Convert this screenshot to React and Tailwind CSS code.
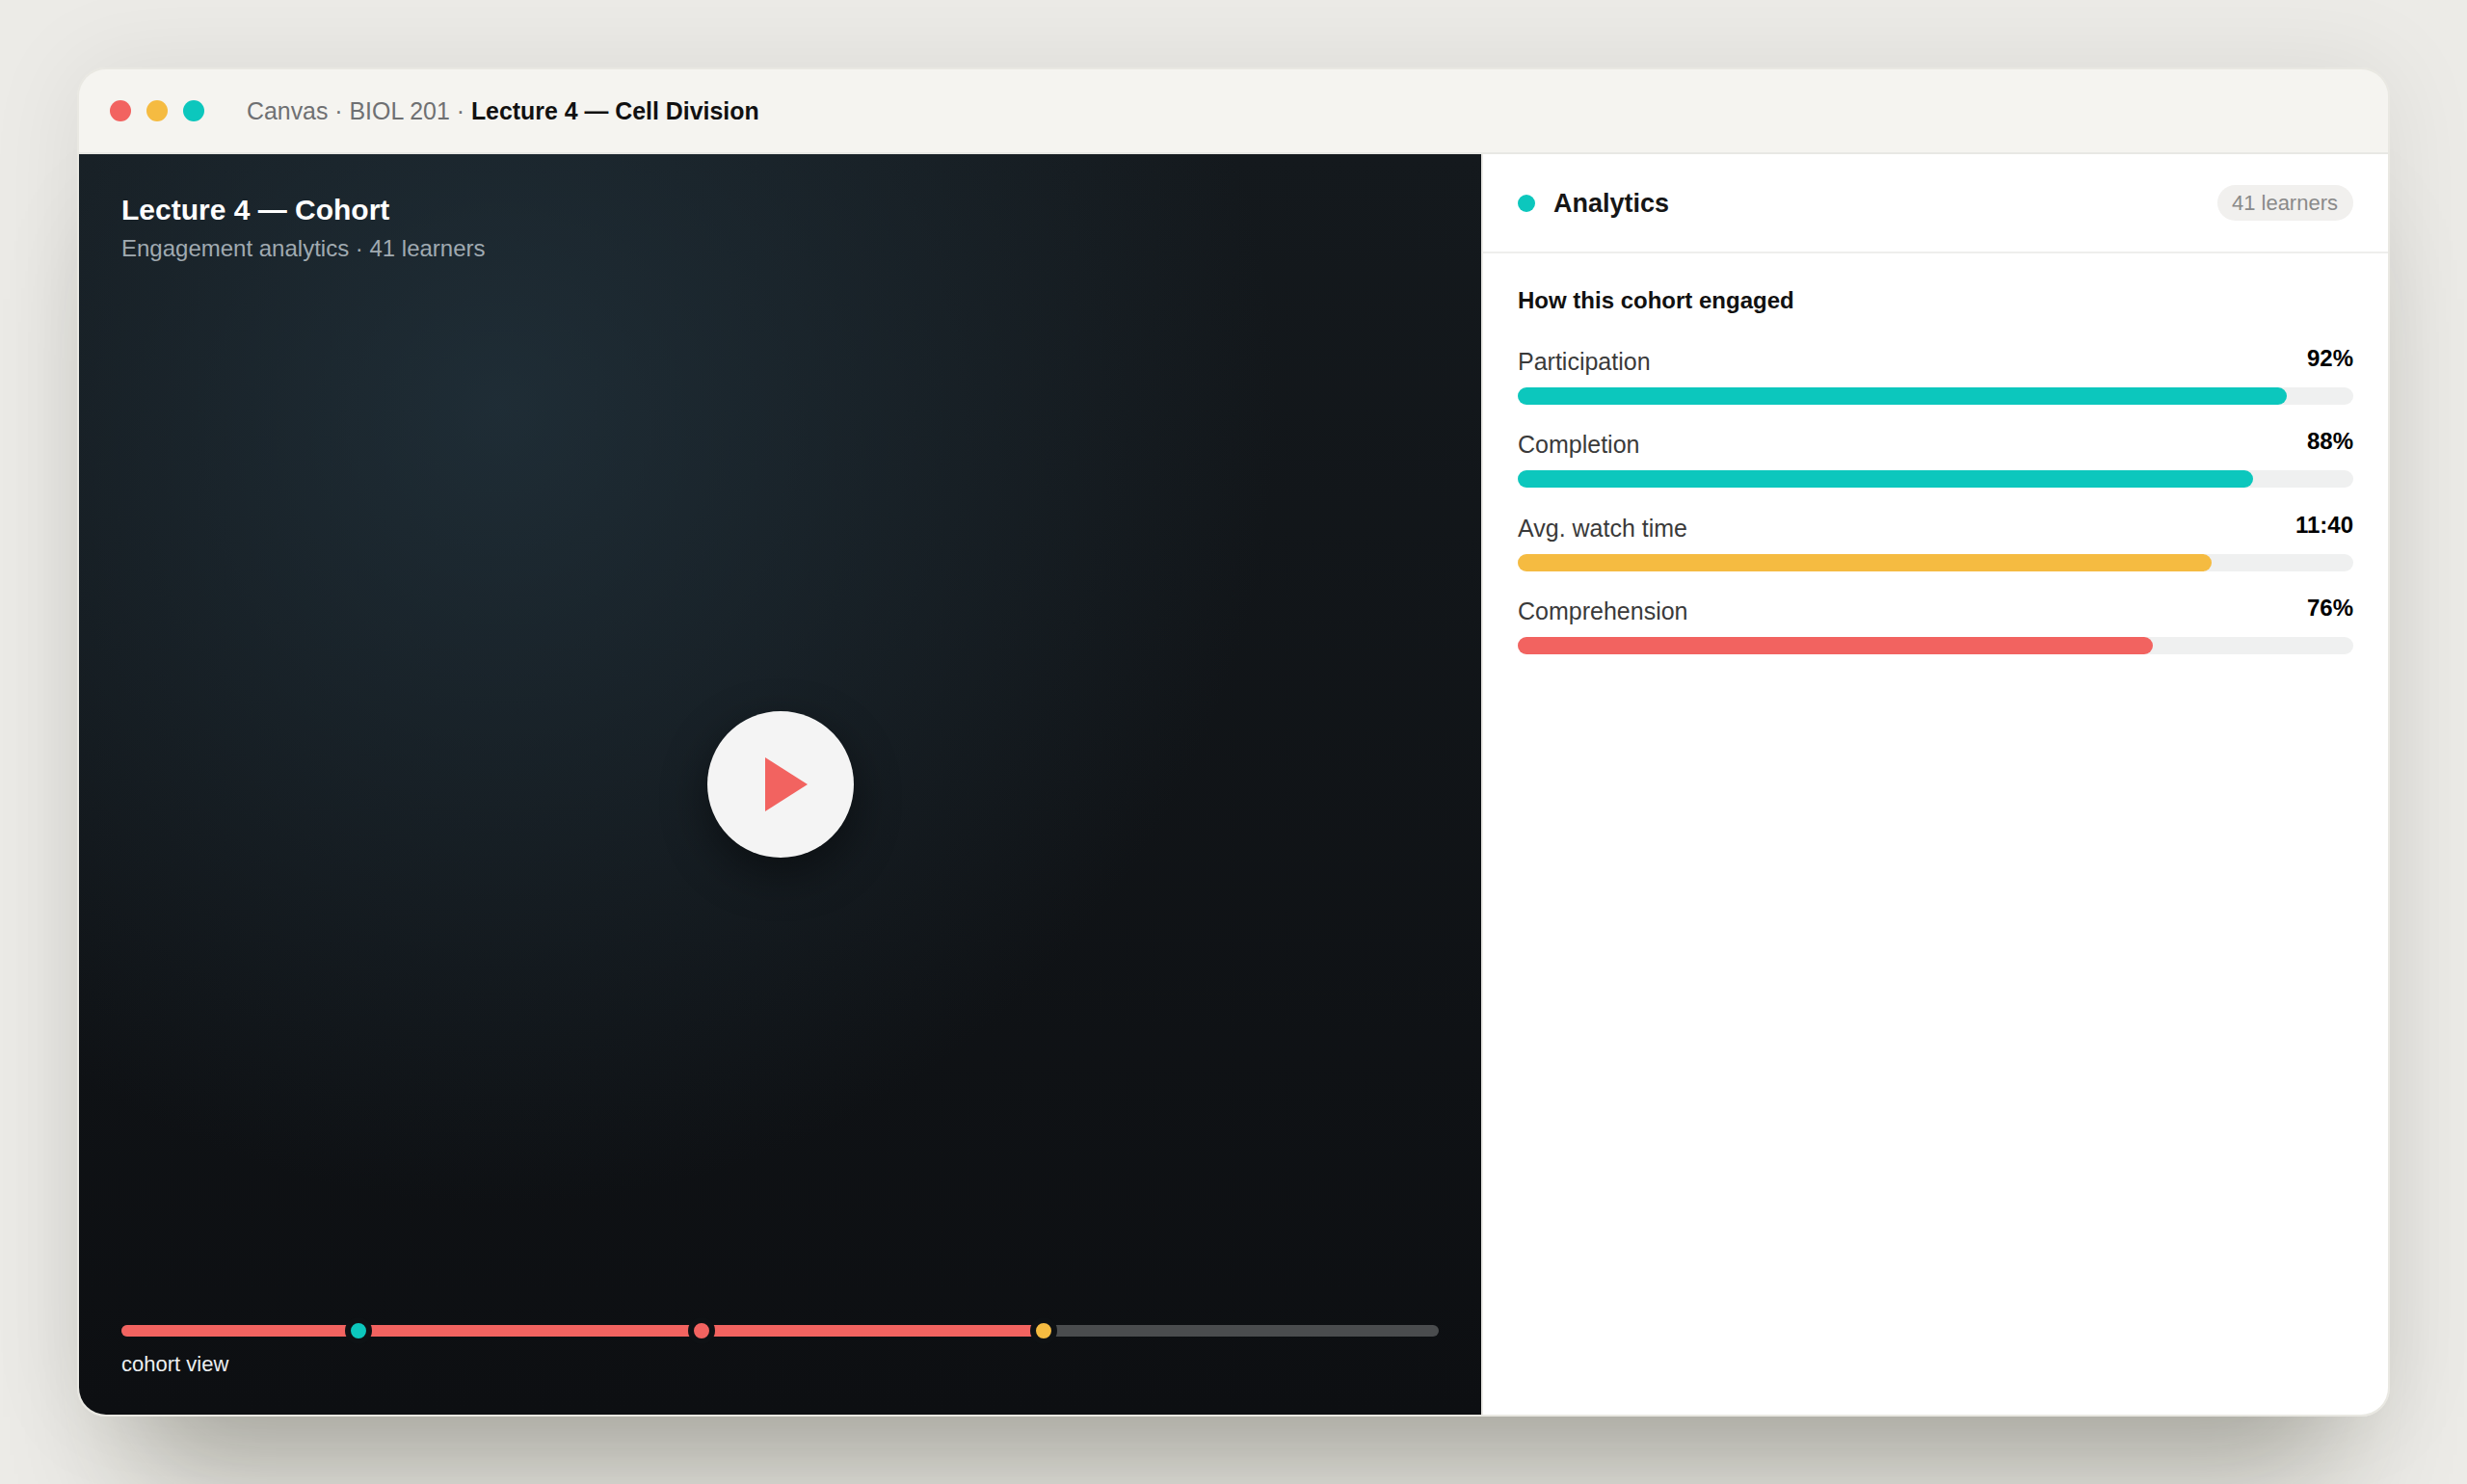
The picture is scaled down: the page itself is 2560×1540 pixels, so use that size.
const metrics = [
  { label: "Participation", value: "92%", width: "w-[92%]", color: "bg-[#0cc7bd]" },
  { label: "Completion", value: "88%", width: "w-[88%]", color: "bg-[#0cc7bd]" },
  { label: "Avg. watch time", value: "11:40", width: "w-[83%]", color: "bg-[#f5bb41]" },
  { label: "Comprehension", value: "76%", width: "w-[76%]", color: "bg-[#f26360]" },
];

const markers = [
  { left: "left-[18%]", color: "bg-[#0cc7bd]" },
  { left: "left-[44.05%]", color: "bg-[#f26360]" },
  { left: "left-[70%]", color: "bg-[#f5bb41]" },
];

function VideoPane() {
  return (
    <div className="relative flex w-[1455px] flex-col justify-between bg-[radial-gradient(ellipse_at_30%_20%,rgba(38,58,70,0.62)_0%,transparent_56%),linear-gradient(180deg,#14191d_0%,#0d0f12_100%)] px-[44px]">
      <div className="pt-[39px]">
        <div className="text-[30px] leading-[38px] font-bold text-white">Lecture 4 — Cohort</div>
        <div className="mt-[5px] text-[24px] leading-[32px] text-[#a0aab1]">
          Engagement analytics · 41 learners
        </div>
      </div>

      <div className="absolute inset-0 flex items-center justify-center">
        <div className="flex h-[152px] w-[152px] items-center justify-center rounded-full bg-[#f4f4f4] shadow-[0_16px_48px_rgba(0,0,0,0.45)]">
          <svg width="44" height="56" viewBox="0 0 44 56" className="ml-[12px]">
            <polygon points="0,0 44,28 0,56" fill="#f26360" />
          </svg>
        </div>
      </div>

      <div className="pb-[37px]">
        <div className="relative h-[12px] rounded-full bg-[#4a4c4e]">
          <div className="h-full w-[70%] rounded-full bg-[#f26360]" />
          {markers.map((m) => (
            <div
              key={m.left}
              className={`absolute top-1/2 h-[28px] w-[28px] -translate-x-1/2 -translate-y-1/2 rounded-full border-[6px] border-[#0e1114] ${m.left} ${m.color}`}
            />
          ))}
        </div>
        <div className="mt-[14px] text-[22px] leading-[30px] text-[#eceff1]">cohort view</div>
      </div>
    </div>
  );
}

function AnalyticsPane() {
  return (
    <div className="flex-1 border-l-2 border-[#ecebe7] bg-white">
      <div className="flex h-[103px] items-center justify-between border-b-2 border-[#eeeeec] px-[36px]">
        <div className="flex items-center gap-[19px]">
          <span className="h-[18px] w-[18px] rounded-full bg-[#0cc7bd]" />
          <span className="pt-[2px] text-[27px] font-bold text-[#161616]">Analytics</span>
        </div>
        <span className="flex h-[37px] items-center rounded-full bg-[#f1f0ee] pr-[16px] pl-[15px] text-[22px] text-[#8a8a8a]">
          41 learners
        </span>
      </div>

      <div className="px-[36px] pt-[33px]">
        <div className="text-[24px] leading-[32px] font-bold text-[#111111]">How this cohort engaged</div>
        <div className="mt-[28px] flex flex-col gap-[22.4px]">
          {metrics.map((m) => (
            <div key={m.label}>
              <div className="flex h-[46px] items-start justify-between">
                <span className="pt-[3px] text-[25px] leading-[32px] text-[#3a3a3a]">{m.label}</span>
                <span className="text-[24px] leading-[32px] font-bold text-black">{m.value}</span>
              </div>
              <div className="h-[18px] rounded-full bg-[#eff0f0]">
                <div className={`h-full rounded-full ${m.width} ${m.color}`} />
              </div>
            </div>
          ))}
        </div>
      </div>
    </div>
  );
}

export default function App() {
  return (
    <div className="flex h-[1540px] items-center justify-center bg-[#ecebe7] font-['Liberation_Sans',Arial,sans-serif]">
      <div className="flex h-[1400px] w-[2400px] flex-col overflow-hidden rounded-[30px] border-2 border-[#e9e8e2] shadow-[0_120px_120px_-60px_rgba(30,30,10,0.3),0_0_100px_rgba(0,0,0,0.08)]">
        <div className="flex h-[88px] shrink-0 items-center border-b-2 border-[#e8e8e4] bg-[#f5f4f0] pl-[32px]">
          <div className="flex gap-[16px]">
            <span className="h-[22px] w-[22px] rounded-full bg-[#f26360]" />
            <span className="h-[22px] w-[22px] rounded-full bg-[#f5bb41]" />
            <span className="h-[22px] w-[22px] rounded-full bg-[#0cc7bd]" />
          </div>
          <div className="ml-[44px] pt-[2px] text-[24.9px] text-[#6f7072]">
            Canvas · BIOL 201 · <span className="font-bold text-[#111111]">Lecture 4 — Cell Division</span>
          </div>
        </div>
        <div className="flex min-h-0 flex-1">
          <VideoPane />
          <AnalyticsPane />
        </div>
      </div>
    </div>
  );
}
